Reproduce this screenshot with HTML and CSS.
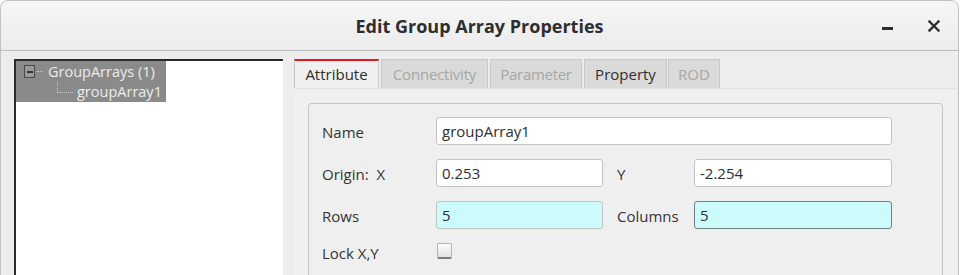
FILE: index.html
```html
<!DOCTYPE html>
<html lang="en">
<head>
    <meta charset="UTF-8">
    <title>Edit Group Array Properties</title>
    <link rel="stylesheet" href="styles.css">
</head>
<body>
<div class="window">
    <div class="titlebar">
        <span></span>
        <span class="title">Edit Group Array Properties</span>
        <div class="controls">
            <span class="min"></span>
            <svg class="close" width="12" height="12" viewBox="0 0 12 12">
                <path d="M1.5 1.5 L10.5 10.5 M10.5 1.5 L1.5 10.5" stroke="#2e2e2e" stroke-width="2.4" stroke-linecap="square"/>
            </svg>
        </div>
    </div>
    <div class="main">
        <div class="tree">
            <div class="sel">
                <div class="node">
                    <span class="expander"></span>
                    <span class="hdots"></span>
                    <span class="label">GroupArrays (1)</span>
                </div>
                <div class="node child">
                    <span class="branch"></span>
                    <span class="label">groupArray1</span>
                </div>
            </div>
        </div>
        <div class="tabwidget">
            <nav class="tabs">
                <a href="javascript://" class="cur t-attr">Attribute</a>
                <a href="javascript://" class="off t-conn">Connectivity</a>
                <a href="javascript://" class="off t-param">Parameter</a>
                <a href="javascript://" class="t-prop">Property</a>
                <a href="javascript://" class="off t-rod">ROD</a>
            </nav>
            <div class="pane">
                <div class="group">
                    <label>Name</label>
                    <input class="wide" type="text" value="groupArray1">

                    <label>Origin:&nbsp; X</label>
                    <input type="text" value="0.253">
                    <span></span>
                    <label>Y</label>
                    <input type="text" value="-2.254">

                    <label>Rows</label>
                    <input class="cyan" type="text" value="5">
                    <span></span>
                    <label>Columns</label>
                    <input class="cyan focus" type="text" value="5">

                    <label class="lock">Lock X,Y</label>
                    <span class="check"></span>
                </div>
            </div>
        </div>
    </div>
</div>
</body>
</html>
```

FILE: styles.css
```css
html, body {
    margin: 0;
    padding: 0;
    background: #fff;
    font-family: "Open Sans", "Noto Sans", sans-serif;
    color: #333;
}
.window {
    width: 957px;
    height: 274px;
    border: 1px solid #c2c2c2;
    border-bottom: none;
    border-radius: 8px 8px 0 0;
    background: #ededed;
    overflow: hidden;
}
.titlebar {
    height: 49px;
    border-bottom: 1px solid #bcbcbc;
    background: linear-gradient(#f6f6f6, #ececec);
    display: grid;
    grid-template-columns: 1fr auto 1fr;
    align-items: center;
}
.title {
    font-weight: bold;
    font-size: 18px;
    color: #2e2e2e;
}
.controls {
    display: flex;
    justify-content: flex-end;
    align-items: center;
    padding-right: 18px;
    gap: 35px;
}
.min {
    width: 11px;
    height: 3px;
    background: #2e2e2e;
    margin-top: 5px;
}
.close {
    display: block;
}
.main {
    display: flex;
    padding: 8px 0 0 13px;
    gap: 11px;
}
.tree {
    width: 267px;
    height: 220px;
    background: #fff;
    border-top: 2px solid #2a2a2a;
    border-left: 2px solid #2a2a2a;
}
.sel {
    width: 150px;
    background: #8a8a8a;
    color: #ececec;
    font-size: 14.5px;
    padding-bottom: 1px;
}
.node {
    height: 20px;
    display: flex;
    align-items: center;
}
.expander {
    width: 9px;
    height: 11px;
    margin-left: 8px;
    border: 1px solid #4a4a4a;
    background: linear-gradient(to bottom, #9a9a9a 0, #9a9a9a 45%, #333 45%, #333 60%, #9a9a9a 60%);
    background-size: 6px 100%;
    background-repeat: no-repeat;
    background-position: center;
    background-color: #9a9a9a;
}
.hdots {
    width: 6px;
    margin: 0 5px 0 2px;
    border-top: 1px dotted #c8c8c8;
}
.child {
    padding-left: 41px;
}
.branch {
    width: 15px;
    height: 10px;
    margin-top: -8px;
    margin-right: 4px;
    border-left: 1px dotted #c8c8c8;
    border-bottom: 1px dotted #c8c8c8;
}
.tabwidget {
    flex: 1;
    display: flex;
    flex-direction: column;
    margin-right: 2px;
}
.tabs {
    display: flex;
    gap: 2px;
    height: 29px;
}
.tabs a {
    display: block;
    box-sizing: border-box;
    height: 29px;
    padding-top: 4px;
    text-align: center;
    background: #dadada;
    border: 1px solid #c8c8c8;
    border-bottom: none;
    color: #2e2e2e;
    text-decoration: none;
    font-size: 15px;
    white-space: nowrap;
}
.tabs a.off {
    color: #a6a6a6;
}
.tabs a.cur {
    background: #f0f0f0;
    border-top: 2px solid #e1181e;
    padding-top: 3px;
}
.tabs .t-attr { width: 85px; }
.tabs .t-conn { width: 107px; letter-spacing: -0.2px; }
.tabs .t-param { width: 92px; letter-spacing: -0.3px; }
.tabs .t-prop { width: 83px; }
.tabs .t-rod { width: 52px; margin-left: -1px; }
.pane {
    flex: 1;
    background: #f0f0f0;
    border-top: 1px solid #e2e2e2;
    padding: 14px 13px 0 14px;
}
.group {
    border: 1px solid #c6c6c6;
    border-bottom: none;
    border-radius: 4px 4px 0 0;
    background: #efefef;
    height: 200px;
    padding: 13px 0 0 13px;
    display: grid;
    grid-template-columns: 114px 167px 14px 77px 198px;
    grid-template-rows: 28px 28px 28px 20px;
    row-gap: 14px;
    align-items: center;
    align-content: start;
    font-size: 15px;
}
.group label {
    color: #333;
    padding-top: 1px;
}
.group label.lock {
    align-self: start;
    padding-top: 0;
}
.group input {
    box-sizing: border-box;
    height: 28px;
    width: 100%;
    margin: 0;
    padding: 0 5px;
    border: 1px solid #c2c2c2;
    border-radius: 3px;
    background: #fff;
    font-family: "Open Sans", "Noto Sans", sans-serif;
    font-size: 15px;
    color: #2e2e2e;
    outline: none;
}
.group input.wide {
    grid-column: 2 / 6;
}
.group input.cyan {
    background: #ccfbfb;
}
.group input.focus {
    border-color: #6f8282;
}
.check {
    align-self: start;
    width: 13px;
    height: 13px;
    margin-left: 1px;
    border: 1px solid #b4b4b4;
    border-bottom: 2px solid #7a7a7a;
    border-radius: 2px;
    background: linear-gradient(#fdfdfd, #e2e2e2);
}
```
